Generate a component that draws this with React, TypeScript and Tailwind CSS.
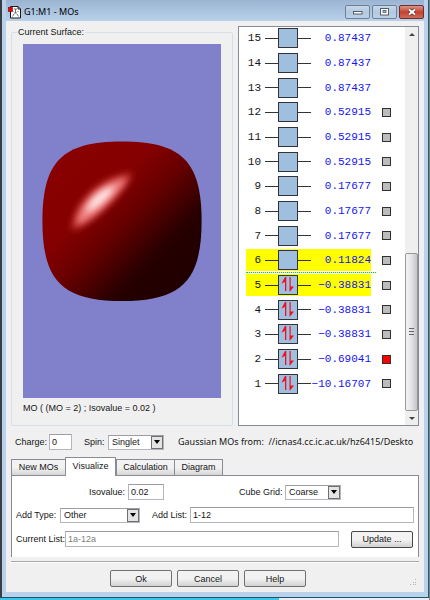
import React from 'react';

type Orbital = {
    id: number;
    energy: string;
    filled?: boolean;
    highlighted?: boolean;
    box?: boolean;
    on?: boolean;
};

const orbitals: Orbital[] = [
    { id: 15, energy: '0.87437' },
    { id: 14, energy: '0.87437' },
    { id: 13, energy: '0.87437' },
    { id: 12, energy: '0.52915', box: true },
    { id: 11, energy: '0.52915', box: true },
    { id: 10, energy: '0.52915', box: true },
    { id: 9, energy: '0.17677', box: true },
    { id: 8, energy: '0.17677', box: true },
    { id: 7, energy: '0.17677', box: true },
    { id: 6, energy: '0.11824', box: true, highlighted: true },
    { id: 5, energy: '−0.38831', box: true, highlighted: true, filled: true },
    { id: 4, energy: '−0.38831', box: true, filled: true },
    { id: 3, energy: '−0.38831', box: true, filled: true },
    { id: 2, energy: '−0.69041', box: true, filled: true, on: true },
    { id: 1, energy: '−10.16707', box: true, filled: true },
];

const inputClass = 'min-w-0 h-4 border border-[#b4b6be] border-t-[#9a9ca6] bg-white px-[2px] text-[9px] leading-3 outline-none';

const TitleBar: React.FC = () => (
    <header className="flex h-[21px] items-start justify-between bg-linear-to-b from-[#9ab4d2] to-[#b9d1ea] pl-[2px]">
        <div className="flex items-center gap-[3px] pt-[5px]">
            <svg width="13" height="14" viewBox="0 0 13 14" aria-hidden="true">
                <path d="M2.500 1.500h7.500l2.500 2.500v9h-10z" fill="#fff" stroke="#1a1a1a" />
                <path d="M10 1.500V4h2.500" stroke="#1a1a1a" fill="none" />
                <path d="M6 4h3M7.500 4v4M6 8h3M6 9l-1.500 2.500M9 9l1.500 2.500M5 6v1M10 6v1" stroke="#555" strokeWidth="0.800" fill="none" />
                <rect x="0.500" y="2.500" width="4" height="4" fill="#f00000" stroke="#700" strokeWidth="0.600" />
            </svg>
            <h1 className="font-['Noto_Sans'] text-[9px] leading-[14px] text-black">G1:M1 - MOs</h1>
        </div>
        <div className="flex gap-[2px] pt-[5px]">
            <button aria-label="Minimize" className="flex h-[14px] w-[25px] items-center justify-center rounded-[2px] border border-[#6f8196] bg-linear-to-b from-[#c6d8ea] via-[#b4c9df] to-[#bcd1e7]">
                <svg width="10" height="8" viewBox="0 0 10 8"><rect x="0.500" y="3.500" width="8.500" height="2.500" fill="#fff" stroke="#555d68" /></svg>
            </button>
            <button aria-label="Maximize" className="flex h-[14px] w-[25px] items-center justify-center rounded-[2px] border border-[#6f8196] bg-linear-to-b from-[#c6d8ea] via-[#b4c9df] to-[#bcd1e7]">
                <svg width="9" height="8" viewBox="0 0 9 8"><rect x="0.500" y="0.500" width="8" height="6.500" fill="#fff" stroke="#555d68" /><rect x="3" y="2.500" width="3" height="2" fill="#9fb4ca" stroke="#555d68" strokeWidth="0.800" /></svg>
            </button>
            <button aria-label="Close" className="flex h-[14px] w-[25px] items-center justify-center rounded-[2px] border border-[#6b2f2c] bg-linear-to-b from-[#dc9388] via-[#c4402c] to-[#cf6a58]">
                <svg width="10" height="8" viewBox="0 0 10 8"><path d="M2 1.500l6 5M8 1.500l-6 5" stroke="#4e2a2a" strokeWidth="3.400" /><path d="M2 1.500l6 5M8 1.500l-6 5" stroke="#fff" strokeWidth="2" /></svg>
            </button>
        </div>
    </header>
);

const Surface: React.FC = () => (
    <svg className="min-h-0 w-full flex-1 bg-[#8180cb]" viewBox="0 0 199 354" aria-label="Orbital surface">
        <defs>
            <linearGradient id="shade" gradientUnits="userSpaceOnUse" x1="44" y1="122" x2="162" y2="240">
                <stop offset="0" stopColor="#880000" />
                <stop offset="0.280" stopColor="#840000" />
                <stop offset="0.480" stopColor="#680000" />
                <stop offset="0.630" stopColor="#460000" />
                <stop offset="0.740" stopColor="#2b0000" />
                <stop offset="0.820" stopColor="#220000" />
            </linearGradient>
            <filter id="soft" x="-50%" y="-50%" width="200%" height="200%"><feGaussianBlur stdDeviation="4" /></filter>
            <filter id="glow" x="-50%" y="-50%" width="200%" height="200%"><feGaussianBlur stdDeviation="3" /></filter>
        </defs>
        <path d="M19.500 177C19.500 117 39.500 97 99.500 97S179.500 117 179.500 177 159.500 257.500 99.500 257.500 19.500 237 19.500 177Z" fill="url(#shade)" />
        <path d="M49 186C49 160 78 130 110 129C106 144 68 184 49 186Z" fill="#c83838" filter="url(#soft)" />
        <path d="M54 180C56 160 78 138 104 134C100 146 68 178 54 180Z" fill="#f08484" filter="url(#glow)" />
        <path d="M63 168C67 155 79 144 92 142C89 151 73 166 63 168Z" fill="#ffe8e8" filter="url(#glow)" />
    </svg>
);

const SurfacePanel: React.FC = () => (
    <fieldset className="flex min-w-0 flex-1 flex-col rounded-[2px] border border-[#d5dfe8] px-[11px] pb-[10px]">
        <legend className="-ml-[6px] px-[1px]">Current Surface:</legend>
        <div className="flex flex-1 flex-col pt-[6px]">
            <Surface />
            <p className="whitespace-nowrap pt-[3px] leading-[14px]">MO ( (MO = 2) ; Isovalue = 0.02 )</p>
        </div>
    </fieldset>
);

const OrbitalRow: React.FC<{ orbital: Orbital }> = ({ orbital }) => (
    <li className="relative flex flex-1 items-center gap-[11px]">
        <div className={`flex h-[22px] w-[125px] items-center font-['Liberation_Mono'] text-[11px] leading-3 ${orbital.highlighted ? 'bg-[#ffff00]' : ''}`}>
            <span className="w-[15px] text-right">{orbital.id}</span>
            <span className="ml-1 h-px w-[13px] bg-[#333]" />
            <span className="flex h-5 w-5 shrink-0 items-center justify-center border border-[#30343a] bg-[#a0bede]">
                {orbital.filled && (
                    <svg width="16" height="16" viewBox="0 0 16 16" fill="#f01020" aria-hidden="true">
                        <path d="M5 0h1.300v14H5V5L1.500 6.500zM9.500 0h1.200v9.500H14L10 14.500h-.500z" />
                    </svg>
                )}
            </span>
            <span className="h-px w-[13px] shrink-0 bg-[#333]" />
            <span className="flex w-[60px] justify-end text-[#1414f0]">{orbital.energy}</span>
        </div>
        {orbital.box && (
            <input
                type="checkbox"
                aria-label={`Surface for orbital ${orbital.id}`}
                defaultChecked={orbital.on}
                className="h-[9px] w-[9px] appearance-none border border-[#303030] bg-[#bcbcbc] checked:bg-[#ff0000]"
            />
        )}
        {orbital.id === 6 && <span className="absolute bottom-0 left-0 w-[130px] border-t border-dotted border-[#00e000]" />}
    </li>
);

const OrbitalPanel: React.FC = () => (
    <section className="flex w-[181px] shrink-0 border border-[#858b96] bg-white">
        <ul className="-mt-px flex flex-1 flex-col pb-[29px] pl-[7px]">
            {orbitals.map((orbital) => (
                <OrbitalRow key={orbital.id} orbital={orbital} />
            ))}
        </ul>
        <div className="flex w-[13px] flex-col bg-[#efefef]">
            <button aria-label="Scroll up" className="flex h-[14px] items-center justify-center">
                <svg width="6" height="3" viewBox="0 0 6 3"><path d="M0 3l3-3 3 3z" fill="#444" /></svg>
            </button>
            <div className="flex flex-1 flex-col">
                <div className="flex-[213]" />
                <div className="flex flex-[157] items-center justify-center rounded-[2px] border border-[#989898] bg-linear-to-r from-[#f4f4f4] via-[#e4e4e8] to-[#c4c4c8]">
                    <svg width="5" height="7" viewBox="0 0 5 7"><path d="M0 .5h5M0 3.500h5M0 6.500h5" stroke="#666" /></svg>
                </div>
            </div>
            <button aria-label="Scroll down" className="flex h-[14px] items-center justify-center">
                <svg width="6" height="3" viewBox="0 0 6 3"><path d="M0 0l3 3 3-3z" fill="#444" /></svg>
            </button>
        </div>
    </section>
);

const Select: React.FC<{ id: string; options: string[]; width: string }> = ({ id, options, width }) => (
    <span className={`relative flex h-[15px] shrink-0 ${width}`}>
        <select id={id} className="w-full appearance-none border border-[#b4b6be] border-t-[#9a9ca6] bg-white pl-[3px] text-[9px] leading-3 outline-none">
            {options.map((option) => (
                <option key={option}>{option}</option>
            ))}
        </select>
        <span className="pointer-events-none absolute inset-y-px right-px flex w-3 items-center justify-center border border-[#707070] bg-[#e4e4e4]">
            <svg width="6" height="4" viewBox="0 0 6 4"><path d="M0 0h6L3 4z" fill="#000" /></svg>
        </span>
    </span>
);

const tabs = [
    { name: 'New MOs', width: 'w-[55px]' },
    { name: 'Visualize', width: 'w-[51px]' },
    { name: 'Calculation', width: 'w-[59px]' },
    { name: 'Diagram', width: 'w-[49px]' },
];

const Tabs: React.FC = () => (
    <div role="tablist" className="flex h-[18px] items-end">
        {tabs.map((tab) =>
            tab.name === 'Visualize' ? (
                <button key={tab.name} role="tab" aria-selected="true" className={`relative -mb-px flex h-[19px] shrink-0 justify-center border border-b-0 border-[#898c95] bg-white pt-px leading-[14px] ${tab.width}`}>
                    {tab.name}
                </button>
            ) : (
                <button key={tab.name} role="tab" aria-selected="false" className={`-mr-px flex h-4 shrink-0 justify-center border border-b-0 border-[#898c95] bg-linear-to-b from-[#f2f2f2] from-50% to-[#d6d6d6] leading-[14px] ${tab.width}`}>
                    {tab.name}
                </button>
            )
        )}
    </div>
);

const VisualizePanel: React.FC = () => (
    <div role="tabpanel" className="flex flex-col gap-[7px] border border-b-0 border-[#898c95] bg-white px-1 pt-2 pb-[9px] whitespace-nowrap">
        <div className="flex h-4 items-center pl-[73px]">
            <label htmlFor="isovalue" className="w-[39px]">Isovalue:</label>
            <input id="isovalue" defaultValue="0.02" className={`w-9 ${inputClass}`} />
            <label htmlFor="grid" className="ml-[75px] w-[46px]">Cube Grid:</label>
            <Select id="grid" width="w-14" options={['Coarse', 'Medium', 'Fine']} />
        </div>
        <div className="flex h-4 items-center">
            <label htmlFor="type" className="w-11">Add Type:</label>
            <Select id="type" width="w-20" options={['Other', 'HOMO', 'LUMO']} />
            <label htmlFor="add" className="ml-3 w-[38px]">Add List:</label>
            <input id="add" defaultValue="1-12" className={`flex-1 ${inputClass}`} />
        </div>
        <div className="flex h-[18px] items-center">
            <label htmlFor="current" className="w-[49px]">Current List:</label>
            <input id="current" readOnly defaultValue="1a-12a" className={`flex-1 text-[#808080] ${inputClass}`} />
            <button className="ml-3 mr-px h-[17px] w-[62px] rounded-[2px] border border-[#484848] bg-linear-to-b from-[#f2f2f2] from-50% to-[#d2d2d2] leading-3">Update ...</button>
        </div>
    </div>
);

const App: React.FC = () => {
    return (
        <div className="flex min-h-screen flex-col bg-[#8d7d80] pr-px font-['Liberation_Sans',sans-serif] text-[9px] leading-3 text-[#151515]">
            <main className="flex flex-1 flex-col border-r border-b border-l-2 border-r-[#176078] border-b-[#1a5568] border-l-[#3a3d44] bg-[#b9d1ea] px-1 pb-[5px]">
                <TitleBar />
                <div className="flex flex-1 flex-col bg-[#f0f0f0] px-[5px] pt-[5px]">
                    <div className="flex flex-1 gap-[5px]">
                        <SurfacePanel />
                        <OrbitalPanel />
                    </div>
                    <div className="mt-2 flex h-4 items-center pl-1 whitespace-nowrap">
                        <label htmlFor="charge" className="w-[34px]">Charge:</label>
                        <input id="charge" defaultValue="0" className={`w-[23px] ${inputClass}`} />
                        <label htmlFor="spin" className="ml-3 w-6">Spin:</label>
                        <Select id="spin" width="w-14" options={['Singlet', 'Triplet']} />
                        <p className="ml-[14px] whitespace-pre font-['Noto_Sans']">Gaussian MOs from:  //icnas4.cc.ic.ac.uk/hz6415/Deskto</p>
                    </div>
                    <div className="pt-[7px]">
                        <Tabs />
                        <VisualizePanel />
                    </div>
                    <div className="mt-1 h-[2px] border-t border-[#a8a8a8] bg-white" />
                    <footer className="relative flex justify-center gap-[5px] pt-[7px] pr-[14px] pb-[5px]">
                        {['Ok', 'Cancel', 'Help'].map((name) => (
                            <button key={name} className="h-[17px] w-[62px] rounded-[2px] border border-[#707070] bg-linear-to-b from-[#f2f2f2] from-50% to-[#d2d2d2] leading-3">
                                {name}
                            </button>
                        ))}
                        <svg className="absolute right-[2px] bottom-[6px]" width="7" height="7" viewBox="0 0 7 7" fill="#b4b4b4" aria-hidden="true">
                            <path d="M5 0h1v1H5zM3 3h1v1H3zM5 3h1v1H5zM0 5h1v1H0zM3 5h1v1H3zM5 5h1v1H5z" />
                        </svg>
                    </footer>
                </div>
            </main>
            <div className="flex h-[2px]">
                <div className="w-[65%] bg-[#3cc4ea]" />
                <div className="flex-1 bg-[#e8eef2]" />
            </div>
        </div>
    );
};

export default App;
